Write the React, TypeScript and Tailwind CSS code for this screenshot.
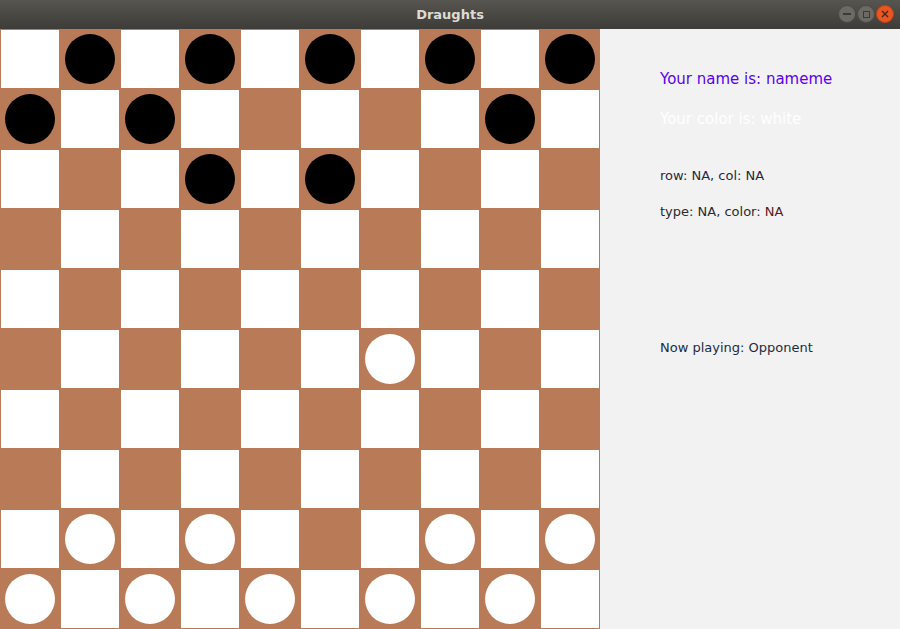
import React from 'react';

// 0 = empty, 1 = black piece, 2 = white piece
const layout: number[][] = [
  [0, 1, 0, 1, 0, 1, 0, 1, 0, 1],
  [1, 0, 1, 0, 0, 0, 0, 0, 1, 0],
  [0, 0, 0, 1, 0, 1, 0, 0, 0, 0],
  [0, 0, 0, 0, 0, 0, 0, 0, 0, 0],
  [0, 0, 0, 0, 0, 0, 0, 0, 0, 0],
  [0, 0, 0, 0, 0, 0, 2, 0, 0, 0],
  [0, 0, 0, 0, 0, 0, 0, 0, 0, 0],
  [0, 0, 0, 0, 0, 0, 0, 0, 0, 0],
  [0, 2, 0, 2, 0, 0, 0, 2, 0, 2],
  [2, 0, 2, 0, 2, 0, 2, 0, 2, 0],
];

function TitleBar() {
  return (
    <div className="relative h-[29px] flex items-center justify-center bg-gradient-to-b from-[#57554f] to-[#3d3c38]">
      <span className="font-['DejaVu_Sans',sans-serif] text-[13px] font-bold text-[#dfdbd2]">Draughts</span>
      <div className="absolute right-[6px] top-[5px] flex gap-[1px]">
        <div className="w-[18px] h-[18px] rounded-full bg-[#6b6a65] border border-[#4a4945] flex items-center justify-center">
          <div className="w-[8px] h-[1.5px] bg-[#3b3a36]" />
        </div>
        <div className="w-[18px] h-[18px] rounded-full bg-[#6b6a65] border border-[#4a4945] flex items-center justify-center">
          <div className="w-[7px] h-[7px] border border-[#3b3a36]" />
        </div>
        <div className="w-[18px] h-[18px] rounded-full bg-[#e9561f] border border-[#b9431a] flex items-center justify-center">
          <svg width="8" height="8" viewBox="0 0 8 8">
            <path d="M1 1L7 7M7 1L1 7" stroke="#3b2a20" strokeWidth="1.4" />
          </svg>
        </div>
      </div>
    </div>
  );
}

function Board() {
  return (
    <div className="grid grid-cols-10 w-[600px] h-[600px] bg-[#b97a57] shrink-0">
      {layout.map((row, r) =>
        row.map((p, c) => (
          <div key={`${r}-${c}`} className="w-[60px] h-[60px] p-px">
            <div
              className={`w-full h-full flex items-center justify-center ${
                (r + c) % 2 === 0 ? 'bg-white' : 'bg-[#b97a57]'
              }`}
            >
              {p === 1 && <div className="w-[50px] h-[50px] rounded-full bg-black" />}
              {p === 2 && <div className="w-[50px] h-[50px] rounded-full bg-white" />}
            </div>
          </div>
        ))
      )}
    </div>
  );
}

export default function App() {
  return (
    <div className="w-[900px] h-[629px] overflow-hidden bg-[#f2f2f2] font-['DejaVu_Sans',sans-serif]">
      <TitleBar />
      <div className="flex">
        <Board />
        <div className="flex-1 pl-[60px] pt-[40px] flex flex-col">
          <div className="text-[15px] leading-[20px] text-[#5a00f0]">Your name is: nameme</div>
          <div className="mt-[20px] text-[15px] leading-[20px] text-white">Your color is: white</div>
          <div className="mt-[39px] text-[13px] leading-[16px] text-[#1e2a42]">row: NA, col: NA</div>
          <div className="mt-[20px] text-[13px] leading-[16px] text-[#2a2a30]">
            type: NA, color: <span className="text-[#5a1a1a]">NA</span>
          </div>
          <div className="mt-[120px] text-[13px] leading-[16px] text-[#1e2a42]">Now playing: Opponent</div>
        </div>
      </div>
    </div>
  );
}
